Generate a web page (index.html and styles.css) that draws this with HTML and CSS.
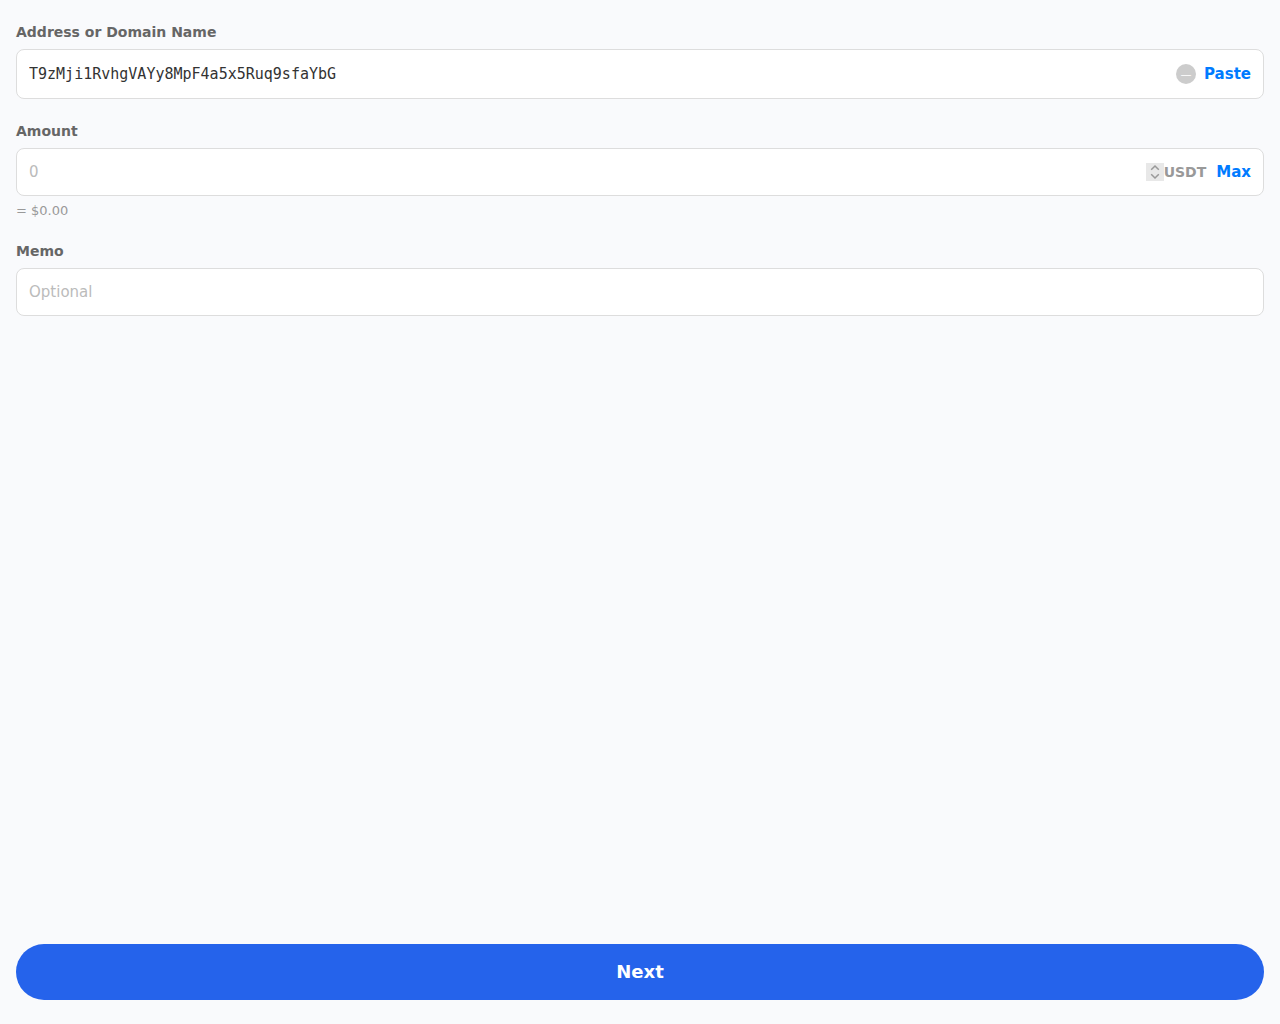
FILE: index.html
```html
<!DOCTYPE html>
<html lang="en">
<head>
  <meta charset="UTF-8" />
  <meta name="viewport" content="width=device-width, initial-scale=1.0"/>
  <title>Send USDT</title>
  <link rel="stylesheet" href="styles.css">
</head>
<body>

  <form class="container">
    <div class="form-group">
      <label for="address">Address or Domain Name</label>
      <div class="input-box address-box">
        <input type="text" id="address" class="address-input" value="T9zMji1RvhgVAYy8MpF4a5x5Ruq9sfaYbG" autocomplete="off" spellcheck="false"/>
        <button type="button" class="clear-btn" id="clearBtn">—</button>
        <button type="button" class="link-btn" id="pasteBtn">Paste</button>
      </div>
    </div>

    <div class="form-group">
      <label for="amount">Amount</label>
      <div class="input-box">
        <input type="number" id="amount" class="amount-input" placeholder="0" min="0" step="any"/>
        <div class="stepper">
          <button type="button" id="stepUp" aria-label="Increase">
            <svg width="18" height="9" viewBox="0 0 18 9"><path d="M5.2 6.8 9 3l3.8 3.8"/></svg>
          </button>
          <button type="button" id="stepDown" aria-label="Decrease">
            <svg width="18" height="9" viewBox="0 0 18 9"><path d="M5.2 2.2 9 6l3.8-3.8"/></svg>
          </button>
        </div>
        <span class="currency">USDT</span>
        <button type="button" class="link-btn" id="maxBtn">Max</button>
      </div>
      <div class="fiat-value" id="fiatValue">= $0.00</div>
    </div>

    <div class="form-group">
      <label for="memo">Memo</label>
      <div class="input-box">
        <input type="text" id="memo" placeholder="Optional"/>
      </div>
    </div>

    <button type="button" class="next-btn">Next</button>
  </form>

  <script>
    const addressInput = document.getElementById("address");
    const amountInput = document.getElementById("amount");
    const fiatValue = document.getElementById("fiatValue");

    document.getElementById("clearBtn").addEventListener("click", () => {
      addressInput.value = "";
      addressInput.focus();
    });

    document.getElementById("pasteBtn").addEventListener("click", async () => {
      addressInput.value = await navigator.clipboard.readText();
    });

    function updateFiat() {
      const amount = parseFloat(amountInput.value) || 0;
      fiatValue.textContent = `= $${amount.toFixed(2)}`;
    }

    function stepAmount(delta) {
      const amount = parseFloat(amountInput.value) || 0;
      amountInput.value = Math.max(0, amount + delta);
      updateFiat();
    }

    document.getElementById("stepUp").addEventListener("click", () => stepAmount(1));
    document.getElementById("stepDown").addEventListener("click", () => stepAmount(-1));

    document.getElementById("maxBtn").addEventListener("click", () => {
      amountInput.value = 0;
      updateFiat();
    });

    amountInput.addEventListener("input", updateFiat);
  </script>

</body>
</html>
```

FILE: styles.css
```css
* {
  box-sizing: border-box;
  margin: 0;
  padding: 0;
}

body {
  font-family: 'DejaVu Sans', sans-serif;
  background: #f9fafc;
  color: #333;
}

.container {
  display: flex;
  flex-direction: column;
  min-height: 100vh;
  padding: 24px 16px;
}

.form-group {
  margin-bottom: 24px;
}

label {
  display: block;
  margin-bottom: 8px;
  font-size: 14px;
  line-height: 17px;
  font-weight: bold;
  color: #666;
}

.input-box {
  display: flex;
  align-items: center;
  min-height: 48px;
  padding: 0 12px;
  background: #fff;
  border: 1px solid #ddd;
  border-radius: 8px;
}

.address-box {
  min-height: 50px;
}

input {
  flex: 1;
  min-width: 0;
  border: none;
  outline: none;
  background: transparent;
  font-family: inherit;
  font-size: 15px;
  color: #333;
}

input::placeholder {
  color: #bbb;
}

.address-input {
  font-family: 'DejaVu Sans Mono', monospace;
}

.amount-input {
  appearance: textfield;
}

.amount-input::-webkit-inner-spin-button {
  display: none;
}

button {
  border: none;
  font-family: inherit;
  cursor: pointer;
}

.stepper {
  display: flex;
  flex-direction: column;
  width: 18px;
}

.stepper button {
  height: 9px;
  background: #e8e8e8;
}

.stepper svg {
  display: block;
  fill: none;
  stroke: #999;
  stroke-width: 1.5;
}

.clear-btn {
  width: 20px;
  height: 20px;
  border-radius: 50%;
  background: #ccc;
  color: #fff;
  font-size: 11px;
}

.link-btn {
  margin-left: 8px;
  background: none;
  color: #007bff;
  font-size: 15px;
  font-weight: bold;
}

.currency {
  margin-right: 2px;
  font-size: 14px;
  font-weight: bold;
  color: #999;
}

.fiat-value {
  margin-top: 6px;
  font-size: 13px;
  line-height: 17px;
  color: #999;
}

.next-btn {
  width: 100%;
  height: 56px;
  margin-top: auto;
  border-radius: 28px;
  background: #2563eb;
  color: #fff;
  font-size: 18px;
  font-weight: bold;
  line-height: 24px;
}
```
